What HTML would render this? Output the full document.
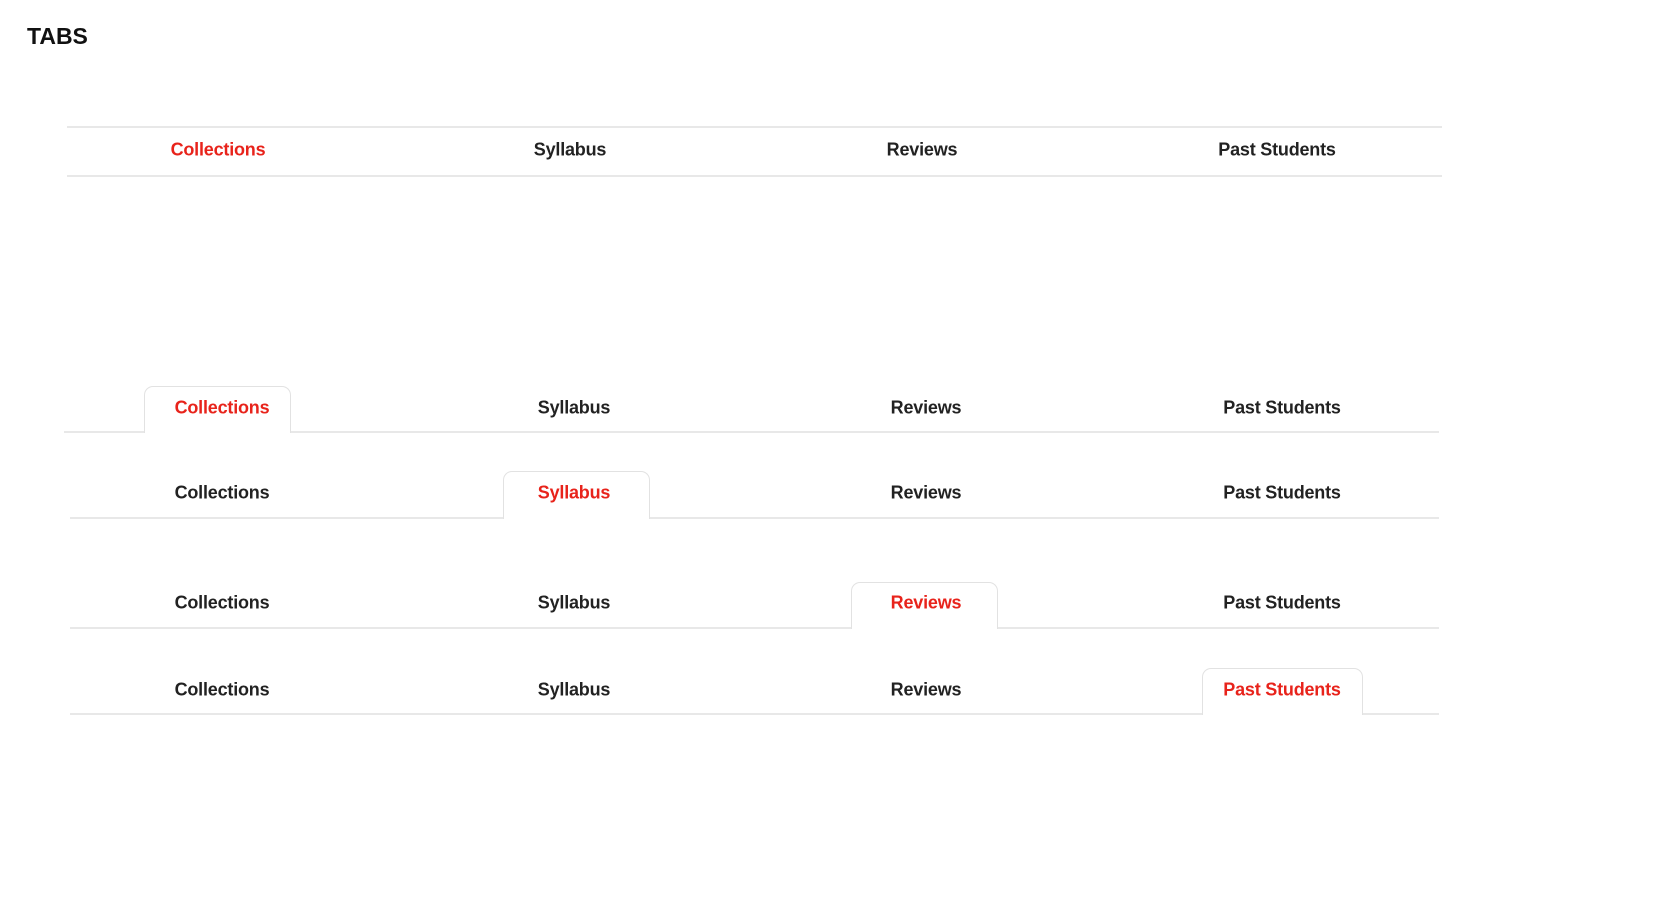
<!DOCTYPE html>
<html><head><style>
body{margin:0;width:1673px;height:897px;background:#fff;position:relative;font-family:"Liberation Sans",sans-serif;overflow:hidden}
.t{position:absolute;font-weight:bold;font-size:18px;color:#222;transform:translate(-50%,-50%);white-space:nowrap;letter-spacing:-0.2px}
.r{color:#e8231b}
.l{position:absolute;height:2px;background:#e8e8e8}
.tab{position:absolute;border:1.5px solid #e2e2e2;border-bottom:none;border-radius:9px 9px 0 0;background:#fff}
</style></head><body>
<div style="position:absolute;left:27px;top:23px;font-weight:bold;font-size:23px;color:#111">TABS</div>

<div class="l" style="left:67px;width:1375px;top:126px"></div>
<div class="l" style="left:67px;width:1375px;top:175px"></div>
<div class="t r" style="left:218px;top:150px">Collections</div>
<div class="t" style="left:570px;top:150px">Syllabus</div>
<div class="t" style="left:922px;top:150px">Reviews</div>
<div class="t" style="left:1277px;top:150px">Past Students</div>

<div class="l" style="left:64px;width:1375px;top:431px"></div>
<div class="tab" style="left:144px;width:145px;top:386px;height:46px"></div>
<div class="t r" style="left:222px;top:408px">Collections</div>
<div class="t" style="left:574px;top:408px">Syllabus</div>
<div class="t" style="left:926px;top:408px">Reviews</div>
<div class="t" style="left:1282px;top:408px">Past Students</div>

<div class="l" style="left:70px;width:1369px;top:517px"></div>
<div class="tab" style="left:503px;width:145px;top:471px;height:47px"></div>
<div class="t" style="left:222px;top:493px">Collections</div>
<div class="t r" style="left:574px;top:493px">Syllabus</div>
<div class="t" style="left:926px;top:493px">Reviews</div>
<div class="t" style="left:1282px;top:493px">Past Students</div>

<div class="l" style="left:70px;width:1369px;top:627px"></div>
<div class="tab" style="left:851px;width:145px;top:582px;height:46px"></div>
<div class="t" style="left:222px;top:603px">Collections</div>
<div class="t" style="left:574px;top:603px">Syllabus</div>
<div class="t r" style="left:926px;top:603px">Reviews</div>
<div class="t" style="left:1282px;top:603px">Past Students</div>

<div class="l" style="left:70px;width:1369px;top:713px"></div>
<div class="tab" style="left:1202px;width:159px;top:668px;height:46px"></div>
<div class="t" style="left:222px;top:690px">Collections</div>
<div class="t" style="left:574px;top:690px">Syllabus</div>
<div class="t" style="left:926px;top:690px">Reviews</div>
<div class="t r" style="left:1282px;top:690px">Past Students</div>
</body></html>
